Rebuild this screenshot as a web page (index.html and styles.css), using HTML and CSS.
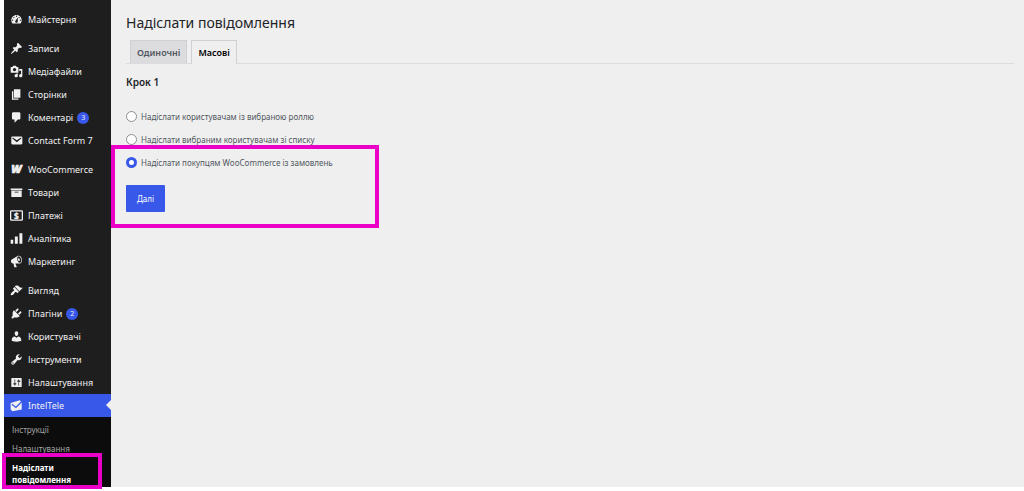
FILE: index.html
```html
<!DOCTYPE html>
<html lang="uk">
<head>
    <meta charset="UTF-8">
    <title>Надіслати повідомлення</title>
    <link rel="stylesheet" href="styles.css">
</head>
<body>
    <div class="layout">
        <nav class="sidebar">
            <ul class="menu">
                <li><a href="#"><svg viewBox="0 0 20 20"><path d="M3.76 16h12.48c1.1-1.37 1.76-3.11 1.76-5 0-4.42-3.58-8-8-8s-8 3.58-8 8c0 1.89.66 3.63 1.76 5zM10 4c.55 0 1 .45 1 1s-.45 1-1 1-1-.45-1-1 .45-1 1-1zM6 6c.55 0 1 .45 1 1s-.45 1-1 1-1-.45-1-1 .45-1 1-1zm8 0c.55 0 1 .45 1 1s-.45 1-1 1-1-.45-1-1 .45-1 1-1zm-5.37 5.55L12 7v6c0 1.1-.9 2-2 2s-2-.9-2-2c0-.57.24-1.08.63-1.45zM4 10c.55 0 1 .45 1 1s-.45 1-1 1-1-.45-1-1 .45-1 1-1zm12 0c.55 0 1 .45 1 1s-.45 1-1 1-1-.45-1-1 .45-1 1-1z"/></svg>Майстерня</a></li>
            </ul>
            <ul class="menu">
                <li><a href="#"><svg viewBox="0 0 20 20"><path d="M10.44 3.02l1.82-1.82 6.36 6.35-1.83 1.82c-1.05-.68-2.48-.57-3.41.36l-.75.75c-.92.93-1.04 2.35-.35 3.41l-1.83 1.82-2.41-2.41-2.8 2.79c-.42.42-3.38 2.71-3.8 2.29s1.86-3.39 2.28-3.81l2.79-2.79L4.1 9.36l1.83-1.82c1.05.69 2.48.57 3.4-.36l.75-.75c.93-.92 1.05-2.35.36-3.41z"/></svg>Записи</a></li>
                <li><a href="#"><svg viewBox="0 0 20 20"><path d="M13 11V4c0-.55-.45-1-1-1h-1.67L9 1H5L3.67 3H2c-.55 0-1 .45-1 1v7c0 .55.45 1 1 1h10c.55 0 1-.45 1-1zM7 4.5c1.38 0 2.5 1.12 2.5 2.5S8.38 9.5 7 9.5 4.5 8.38 4.5 7 5.62 4.5 7 4.5zM14 6h5v10.5c0 1.38-1.12 2.5-2.5 2.5S14 17.88 14 16.5s1.12-2.5 2.5-2.5c.17 0 .34.02.5.05V9h-3V6zm-4 8.05V13h2v3.5c0 1.38-1.12 2.5-2.5 2.5S7 17.88 7 16.5 8.12 14 9.5 14c.17 0 .34.02.5.05z"/></svg>Медіафайли</a></li>
                <li><a href="#"><svg viewBox="0 0 20 20"><path d="M6 15V2h10v13H6zm-1 1h8v2H3V5h2v11z"/></svg>Сторінки</a></li>
                <li><a href="#"><svg viewBox="0 0 20 20"><path d="M5 2h9c1.1 0 2 .9 2 2v7c0 1.1-.9 2-2 2h-2l-5 5v-5H5c-1.1 0-2-.9-2-2V4c0-1.1.9-2 2-2z"/></svg>Коментарі <span class="count">3</span></a></li>
                <li><a href="#"><svg viewBox="0 0 20 20"><path d="M3.87 4h13.25C18.37 4 19 4.59 19 5.79v8.42c0 1.19-.63 1.79-1.88 1.79H3.87c-1.25 0-1.88-.6-1.88-1.79V5.79c0-1.2.63-1.79 1.88-1.79zm6.62 8.6l6.74-5.53c.24-.2.43-.66.13-1.07-.29-.41-.82-.42-1.17-.17l-5.7 3.86L4.8 5.83c-.35-.25-.88-.24-1.17.17-.3.41-.11.87.13 1.07z"/></svg>Contact Form 7</a></li>
            </ul>
            <ul class="menu">
                <li><a href="#"><svg viewBox="0 0 20 20"><text class="woo" x="10" y="16" text-anchor="middle">W</text></svg>WooCommerce</a></li>
                <li><a href="#"><svg viewBox="0 0 20 20"><path d="M19 4v2H1V4h18zM2 7h16v10H2V7zm11 3V9H7v1h6z"/></svg>Товари</a></li>
                <li><a href="#"><svg viewBox="0 0 20 20"><rect class="line" x="1" y="3" width="18" height="14" rx="1"/><text class="dollar" x="10" y="15" text-anchor="middle">$</text></svg>Платежі</a></li>
                <li><a href="#"><svg viewBox="0 0 20 20"><path d="M1 12h4v6H1zM7.500 7h4.500v11H7.500zM14.500 2h4.500v16h-4.500z"/></svg>Аналітика</a></li>
                <li><a href="#"><svg viewBox="0 0 20 20"><path d="M18.15 5.94c.46 1.62.38 3.22-.02 4.48-.42 1.28-1.26 2.18-2.3 2.48-.16.06-.26.06-.4.06-.06.02-.12.02-.18.02-.06.02-.14.02-.22.02h-6.8l2.22 5.5c.02.14-.06.26-.14.34-.08.1-.24.16-.34.16H6.95c-.1 0-.26-.06-.34-.16-.08-.08-.16-.2-.14-.34l-1-5.5H4.25l-.02-.02c-.5.06-1.08-.18-1.54-.62s-.88-1.08-1.06-1.88c-.24-.8-.2-1.56-.02-2.2.18-.62.58-1.08 1.06-1.3l.02-.02 9-5.4c.1-.06.18-.1.24-.16.06-.04.14-.08.24-.12.16-.08.28-.12.5-.18 1.04-.3 2.24.1 3.22.98s1.84 2.24 2.26 3.86zm-2.58 5.98h-.02c.4-.1.74-.34 1.04-.7.58-.7.86-1.76.86-3.04 0-.64-.1-1.3-.28-1.98-.34-1.36-1.02-2.5-1.78-3.24s-1.68-1.1-2.46-.88c-.82.22-1.4.96-1.7 2-.32 1.04-.28 2.36.06 3.72.38 1.36 1 2.5 1.8 3.24.78.74 1.62 1.1 2.48.88zm-2.54-7.08c.22-.04.42-.02.62.04.38.16.76.48 1.02 1s.42 1.2.42 1.78c0 .3-.04.56-.12.8-.18.48-.44.84-.86.94-.34.1-.8-.06-1.14-.4s-.64-.86-.78-1.5c-.18-.62-.12-1.24.02-1.72s.48-.84.82-.94z"/></svg>Маркетинг</a></li>
            </ul>
            <ul class="menu">
                <li><a href="#"><svg viewBox="0 0 20 20"><path d="M14.48 11.06L7.41 3.99l1.5-1.5c.5-.56 2.3-.47 3.51.32 1.21.8 1.43 1.28 2.91 2.1 1.18.64 2.45 1.26 4.45.85zm-.71.71L6.7 4.7 4.93 6.47c-.39.39-.39 1.02 0 1.41l1.06 1.06c.39.39.39 1.03 0 1.42-.6.6-1.43 1.11-2.21 1.69-.35.26-.7.53-1.01.84C1.43 14.23.4 16.08 1.4 17.07c.99 1 2.84-.03 4.18-1.36.31-.31.58-.66.85-1.02.57-.78 1.08-1.61 1.69-2.21.39-.39 1.02-.39 1.41 0l1.06 1.06c.39.39 1.02.39 1.41 0z"/></svg>Вигляд</a></li>
                <li><a href="#"><svg viewBox="0 0 20 20"><path d="M13.11 4.36L9.87 7.6 8 5.73l3.24-3.24c.35-.34 1.05-.2 1.56.32.52.51.66 1.21.31 1.55zm-8 1.77l.91-1.12 9.01 9.01-1.19.84c-.71.71-2.63 1.16-3.82 1.16H6.14L4.9 17.26c-.59.59-1.54.59-2.12 0-.59-.58-.59-1.53 0-2.12l1.24-1.24v-3.88c0-1.13.4-3.19 1.09-3.89zm7.26 3.97l3.24-3.24c.34-.35 1.04-.21 1.55.31.52.51.66 1.21.31 1.55l-3.24 3.25z"/></svg>Плагіни <span class="count">2</span></a></li>
                <li><a href="#"><svg viewBox="0 0 20 20"><path d="M10 9.25c-2.27 0-2.73-3.44-2.73-3.44C7 4.02 7.82 2 9.97 2c2.16 0 2.98 2.02 2.71 3.81 0 0-.41 3.44-2.68 3.44zm0 2.57L12.72 10c2.39 0 4.52 2.33 4.52 4.53v2.49s-3.65 1.13-7.24 1.13c-3.65 0-7.24-1.13-7.24-1.13v-2.49c0-2.25 1.94-4.48 4.47-4.48z"/></svg>Користувачі</a></li>
                <li><a href="#"><svg viewBox="0 0 20 20"><path d="M16.68 9.77c-1.34 1.34-3.3 1.67-4.95.99l-5.41 6.52c-.99.99-2.59.99-3.58 0s-.99-2.59 0-3.57l6.52-5.42c-.68-1.65-.35-3.61.99-4.95 1.28-1.28 3.12-1.62 4.72-1.06l-2.89 2.89 2.82 2.82 2.86-2.87c.53 1.58.18 3.39-1.08 4.65zM3.81 16.21c.4.39 1.04.39 1.43 0 .4-.4.4-1.04 0-1.43-.39-.4-1.03-.4-1.43 0-.39.39-.39 1.03 0 1.43z"/></svg>Інструменти</a></li>
                <li><a href="#"><svg viewBox="0 0 20 20"><path d="M18 16V4c0-.55-.45-1-1-1H3c-.55 0-1 .45-1 1v12c0 .55.45 1 1 1h14c.55 0 1-.45 1-1zM8 11h1c.55 0 1 .45 1 1s-.45 1-1 1H8v1.5c0 .28-.22.5-.5.5s-.5-.22-.5-.5V13H6c-.55 0-1-.45-1-1s.45-1 1-1h1V5.5c0-.28.22-.5.5-.5s.5.22.5.5V11zm5-2h-1c-.55 0-1-.45-1-1s.45-1 1-1h1V5.5c0-.28.22-.5.5-.5s.5.22.5.5V7h1c.55 0 1 .45 1 1s-.45 1-1 1h-1v5.5c0 .28-.22.5-.5.5s-.5-.22-.5-.5V9z"/></svg>Налаштування</a></li>
                <li><a href="#" class="current"><svg viewBox="0 0 20 20"><path d="M1 6l14-4 3 3v11L4 19l-3-3z"/><path class="fold" d="M3 8l6 5L19 3"/></svg>IntelTele</a></li>
            </ul>
            <ul class="submenu">
                <li><a href="#">Інструкції</a></li>
                <li><a href="#">Налаштування</a></li>
                <li class="marked marked-link"><a href="#" class="active">Надіслати повідомлення</a></li>
            </ul>
        </nav>
        <main class="content">
            <h1>Надіслати повідомлення</h1>
            <div class="tabs">
                <a href="#" class="tab">Одиночні</a>
                <a href="#" class="tab tab-active">Масові</a>
            </div>
            <h2>Крок 1</h2>
            <form>
                <label class="option"><input type="radio" name="target"> Надіслати користувачам із вибраною роллю</label>
                <label class="option"><input type="radio" name="target"> Надіслати вибраним користувачам зі списку</label>
                <div class="marked marked-form">
                    <label class="option"><input type="radio" name="target" checked> Надіслати покупцям WooCommerce із замовлень</label>
                    <button type="button">Далі</button>
                </div>
            </form>
        </main>
    </div>
</body>
</html>
```
FILE: styles.css
```css
*, *::after {
    box-sizing: border-box;
}
body {
    margin: 0;
    padding: 0 0 4px 4px;
    background-color: #ffffff;
    font-family: "Noto Sans", "Open Sans", sans-serif;
    font-size: 9px;
    color: #50575e;
}
a {
    color: inherit;
    text-decoration: none;
}
.layout {
    display: flex;
    min-height: calc(100vh - 4px);
    background-color: #efefef;
}

/* sidebar */
.sidebar {
    width: 107px;
    flex-shrink: 0;
    display: flex;
    flex-direction: column;
    padding-top: 8px;
    background-color: #1e1e1e;
    color: #f0f0f1;
}
.menu, .submenu {
    list-style: none;
    margin: 0;
    padding: 0;
}
.menu + .menu {
    margin-top: 6px;
}
.menu a {
    display: flex;
    align-items: center;
    height: 23px;
    padding-left: 6px;
    white-space: nowrap;
}
.menu svg {
    width: 13px;
    height: 13px;
    margin-right: 5px;
    fill: #f0f0f1;
    overflow: visible;
}
.menu .line {
    fill: none;
    stroke: #f0f0f1;
    stroke-width: 2;
}
.woo {
    font: italic 800 17px "Open Sans", sans-serif;
    stroke: #f0f0f1;
    stroke-width: 1;
}
.dollar {
    font: 800 13px "Open Sans", sans-serif;
}
.menu .fold {
    fill: none;
    stroke: #3858e9;
    stroke-width: 2;
}
.count {
    width: 12px;
    height: 12px;
    margin-left: 4px;
    border-radius: 50%;
    background-color: #3858e9;
    font-size: 7px;
    line-height: 12px;
    text-align: center;
}
.menu .current {
    position: relative;
    background-color: #3858e9;
}
.current::after {
    content: "";
    position: absolute;
    right: 0;
    top: 6px;
    border: 5px solid transparent;
    border-left: 0;
    border-right-color: #efefef;
}
.submenu {
    flex: 1;
    padding-top: 4px;
    background-color: #0c0c0c;
    color: #a5a5a6;
    font-size: 8px;
    line-height: 12px;
}
.submenu a {
    display: block;
    padding: 3px 8px 4px;
}
.submenu .active {
    color: #ffffff;
    font-weight: 700;
    padding-bottom: 1px;
}

/* pink frames drawn over the page */
.marked {
    position: relative;
}
.marked::after {
    content: "";
    position: absolute;
    border: 4px solid #ea00c7;
    pointer-events: none;
}
.marked-link::after {
    top: -6px;
    right: 9px;
    bottom: -2px;
    left: -2px;
}
.marked-form::after {
    top: -6px;
    bottom: -16px;
    left: -15px;
    width: 268px;
}

/* page */
.content {
    flex: 1;
    padding: 12px 10px 0 15px;
}
h1 {
    margin: 0 0 6px;
    color: #1d2327;
    font-size: 14px;
    line-height: 22px;
    font-weight: 400;
}
.tabs {
    display: flex;
    gap: 4px;
    padding-left: 4px;
    border-bottom: 1px solid #dcdcde;
}
.tab {
    height: 23px;
    padding: 0 6px;
    border: 1px solid #d0d0d3;
    border-bottom: 0;
    background-color: #dcdcde;
    font-weight: 600;
    line-height: 24px;
}
.tab-active {
    margin-bottom: -1px;
    height: 24px;
    background-color: #efefef;
    color: #000000;
}
h2 {
    margin: 10px 0 15px;
    color: #1d2327;
    font-size: 10px;
    line-height: 16px;
    font-weight: 600;
}
.option {
    display: flex;
    align-items: center;
    height: 23px;
    font-size: 8px;
}
.option input {
    appearance: none;
    width: 11px;
    height: 11px;
    margin: 0 4px 0 0;
    border: 1px solid #8c8f94;
    border-radius: 50%;
    background-color: #ffffff;
}
.option input:checked {
    border: 3px solid #3858e9;
}
button {
    display: block;
    height: 27px;
    margin-top: 11px;
    padding: 0 11px;
    border: 0;
    border-radius: 1px;
    background-color: #3858e9;
    color: #ffffff;
    font-family: inherit;
    font-size: 8px;
}
```
